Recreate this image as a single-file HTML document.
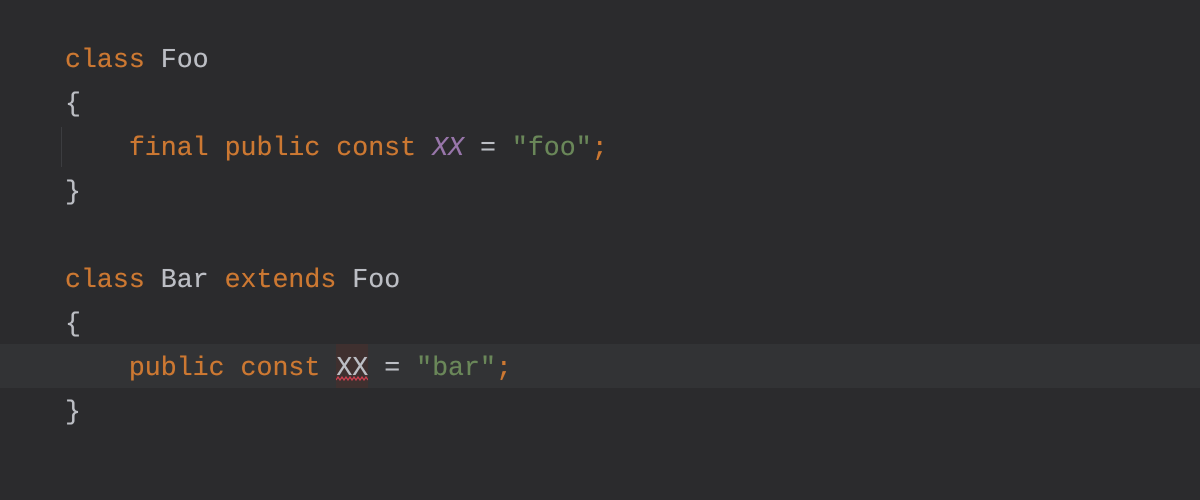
<!DOCTYPE html>
<html><head><style>
html,body{margin:0;padding:0;width:1200px;height:500px;background:#2b2b2d;overflow:hidden}
.code{position:absolute;left:65px;top:38px;font-family:"Liberation Mono",monospace;font-size:26.6px;line-height:44px;color:#bcbec4;white-space:pre;text-shadow:0 0 0.4px currentColor}
.k{color:#cc7832}.s{color:#6a8759}.c{color:#9876aa;font-style:italic}
.hl{position:absolute;left:0;top:344px;width:1200px;height:44px;background:#323335}
.err{position:absolute;left:336px;top:344px;width:32px;height:44px;background:#3f302f}
.guide{position:absolute;left:61px;top:127px;width:1px;height:40px;background:#3c3d40}
.wave{position:absolute;left:336px;top:376px}
</style></head><body>
<div class="hl"></div><div class="err"></div><div class="guide"></div>
<svg class="wave" width="32" height="6"><path d="M0 4 L2 1 L4 4 L6 1 L8 4 L10 1 L12 4 L14 1 L16 4 L18 1 L20 4 L22 1 L24 4 L26 1 L28 4 L30 1 L32 4" stroke="#d04050" fill="none" stroke-width="1.2"/></svg>
<div class="code"><span class="k">class</span> Foo
{
    <span class="k">final public const</span> <span class="c">XX</span> = <span class="s">"foo"</span><span class="k">;</span>
}

<span class="k">class</span> Bar <span class="k">extends</span> Foo
{
    <span class="k">public const</span> XX = <span class="s">"bar"</span><span class="k">;</span>
}</div>
</body></html>
